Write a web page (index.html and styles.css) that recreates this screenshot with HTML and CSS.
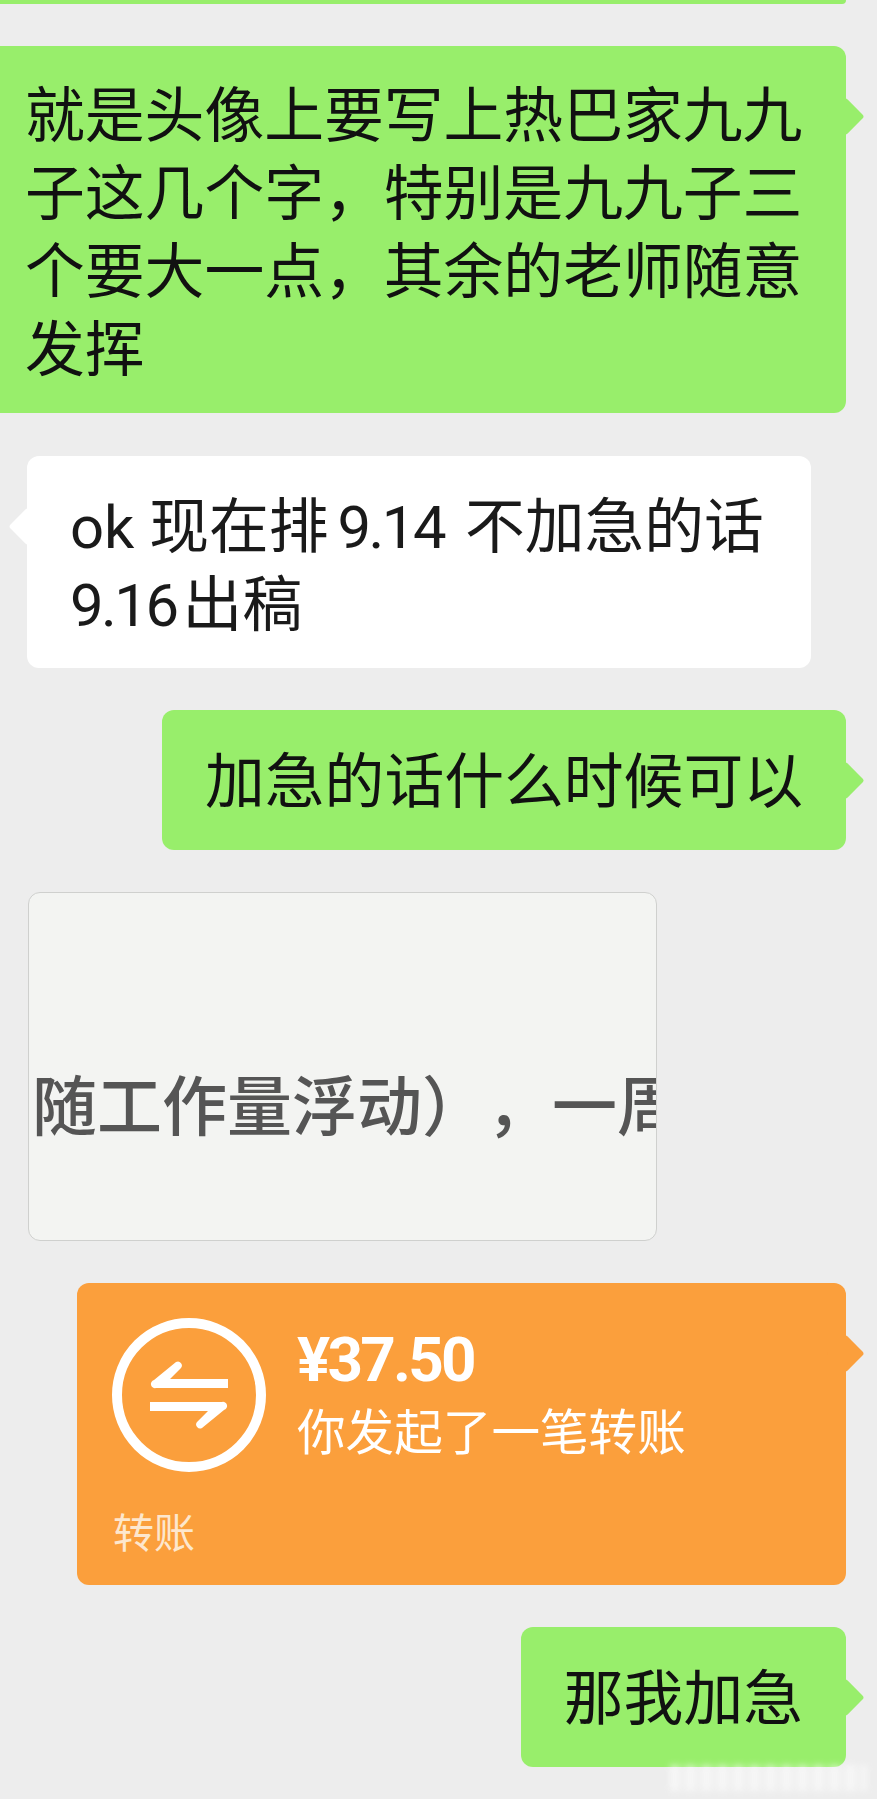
FILE: index.html
```html
<!DOCTYPE html>
<html lang="zh-CN">
<head>
    <meta charset="UTF-8">
    <meta name="viewport" content="width=device-width, initial-scale=1.0">
    <title>聊天记录</title>
    <link rel="stylesheet" href="styles.css">
</head>
<body>

    <div class="chat">
        <!-- tail end of the previous message, scrolled off the top -->
        <div class="bubble-cut"></div>

        <div class="bubble mine wide">就是头像上要写上热巴家九九子这几个字，特别是九九子三个要大一点，其余的老师随意发挥</div>

        <div class="bubble theirs">ok 现在排 <span class="num first">9.14</span> 不加急的话 <span class="num">9.16</span>出稿</div>

        <div class="bubble mine single">加急的话什么时候可以</div>

        <div class="photo">
            <div class="photo-text">期随工作量浮动）<span class="photo-comma">，</span>一周</div>
        </div>

        <div class="transfer">
            <div class="transfer-main">
                <svg class="transfer-icon" viewBox="0 0 154 154">
                    <circle cx="77" cy="77" r="72" fill="none" stroke="#fff" stroke-width="10"/>
                    <path fill="#fff" d="M116 61H58L69 50a4 4 0 0 0-5-6L42 62a4 4 0 0 0 2 8H116Z"/>
                    <path fill="#fff" transform="rotate(180 77 77)" d="M116 61H58L69 50a4 4 0 0 0-5-6L42 62a4 4 0 0 0 2 8H116Z"/>
                </svg>
                <div class="transfer-info">
                    <div class="amount">¥37.50</div>
                    <div class="transfer-desc">你发起了一笔转账</div>
                </div>
            </div>
            <div class="transfer-label">转账</div>
        </div>

        <div class="bubble mine single">那我加急</div>
    </div>

    <div class="watermark"></div>

</body>
</html>
```

FILE: styles.css
```css
html, body {
    margin: 0;
    padding: 0;
}
body {
    position: relative;
    height: 1799px;
    overflow: hidden;
    background-color: #ededed;
    font-family: "Noto Sans CJK SC", "Noto Sans", sans-serif;
    color: #111;
}
.chat {
    display: flex;
    flex-direction: column;
    align-items: flex-end;
    gap: 42px;
    padding-right: 31px;
}
.bubble-cut {
    width: 100%;
    height: 4px;
    background-color: #98ee6b;
    border-radius: 0 0 11px 0;
}
.bubble {
    position: relative;
    box-sizing: border-box;
    padding: 26px 43px 29px;
    font-size: 59.8px;
    line-height: 78px;
    border-radius: 12px;
}
/* little triangle pointing at the sender */
.bubble::after,
.transfer::after {
    content: "";
    position: absolute;
    top: 57px;
    width: 27px;
    height: 27px;
    border-radius: 3px;
    transform: rotate(45deg);
}
.mine {
    background-color: #98ee6b;
}
.mine::after {
    right: -13px;
    background-color: #98ee6b;
}
.wide {
    width: 864px;
    border-radius: 0 12px 12px 0;
}
.single {
    padding-top: 28px;
    padding-bottom: 34px;
}
.theirs {
    align-self: flex-start;
    width: 784px;
    margin-top: 1px;
    margin-left: 27px;
    padding-top: 33px;
    padding-bottom: 23px;
    background-color: #fff;
    font-family: "Roboto", "Noto Sans CJK SC", sans-serif;
    color: #1a1a1a;
}
.theirs::after {
    left: -13px;
    background-color: #fff;
}
.num {
    margin-right: 6px;
    letter-spacing: -2.5px;
}
.num.first {
    margin-left: -6px;
}
.photo {
    align-self: flex-start;
    display: flex;
    align-items: center;
    box-sizing: border-box;
    width: 629px;
    height: 349px;
    margin-left: 28px;
    overflow: hidden;
    background-color: #f3f4f2;
    border: 1px solid #cfd0ce;
    border-radius: 12px;
}
.photo-text {
    flex: none;
    margin-left: -62px;
    margin-top: 70px;
    font-size: 65px;
    font-weight: 500;
    white-space: nowrap;
    text-spacing-trim: space-all;
    color: #555;
    filter: blur(0.7px);
}
/* this comma sits centred in its cell, as in traditional typesetting */
.photo-comma {
    font-family: "Noto Sans CJK TC", sans-serif;
}
.transfer {
    position: relative;
    box-sizing: border-box;
    width: 769px;
    height: 302px;
    padding: 35px 35px 0;
    background-color: #fb9f3c;
    border-radius: 12px;
    color: #fff;
}
.transfer::after {
    right: -13px;
    background-color: #fb9f3c;
}
.transfer-main {
    display: flex;
    gap: 31px;
}
.transfer-icon {
    flex: none;
    width: 154px;
    height: 154px;
}
.transfer-info {
    padding-top: 9px;
}
.amount {
    font-family: "Roboto", sans-serif;
    font-size: 62px;
    font-weight: 700;
    line-height: 66px;
    letter-spacing: -2.8px;
}
.transfer-desc {
    font-size: 48.6px;
    line-height: 72px;
}
.transfer-label {
    margin-top: 33px;
    margin-left: 1px;
    font-size: 41px;
    line-height: 50px;
    color: #fde7cd;
}
/* faint site mark burnt into the bottom corner */
.watermark {
    position: absolute;
    right: 10px;
    bottom: 8px;
    width: 197px;
    height: 26px;
    background: repeating-linear-gradient(90deg, #fff 0 9px, rgba(255, 255, 255, 0.3) 9px 16px);
    opacity: 0.55;
    filter: blur(3px);
}
```
